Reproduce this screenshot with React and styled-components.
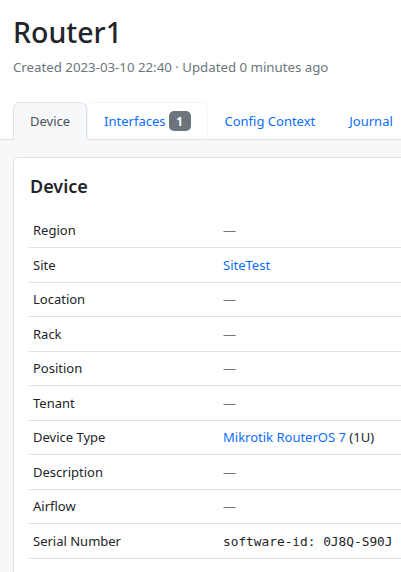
import React from "react";
import styled, { createGlobalStyle } from "styled-components";

const Global = createGlobalStyle`
  html, body { margin: 0; padding: 0; background: #fff; }
  body {
    font-family: "Noto Sans", "Open Sans", sans-serif;
    color: #212529;
    overflow: hidden;
    width: 401px;
    height: 572px;
  }
`;

const Page = styled.div`
  width: 401px;
  height: 572px;
  overflow: hidden;
  display: flex;
  flex-direction: column;
`;

const Header = styled.header`
  padding: 12px 13px 0 13px;
`;

const Title = styled.h1`
  margin: 0;
  font-size: 28.5px;
  font-weight: 500;
  line-height: 40px;
  color: #212529;
`;

const Subtitle = styled.div`
  margin-top: 5px;
  font-size: 13.25px;
  color: #6c757d;
  line-height: 20px;
`;

const TabBar = styled.nav`
  margin-top: 25px;
  display: flex;
  padding-left: 13px;
  border-bottom: 1px solid #dee2e6;
  white-space: nowrap;
`;

const Tab = styled.a`
  display: flex;
  align-items: center;
  gap: 3px;
  height: 36px;
  padding: 0 16px;
  margin-bottom: -1px;
  font-size: 13px;
  color: ${(p) => (p.$active ? "#495057" : "#0d6efd")};
  background: ${(p) => (p.$active ? "#f7f8fa" : "transparent")};
  border: 1px solid ${(p) => (p.$active ? "#dee2e6" : p.$hover ? "#f3f4f6" : "transparent")};
  border-bottom-color: ${(p) => (p.$active ? "#f7f8fa" : "transparent")};
  border-radius: 6px 6px 0 0;
  text-decoration: none;
  flex-shrink: 0;
`;

const Badge = styled.span`
  display: inline-flex;
  align-items: center;
  justify-content: center;
  width: 22px;
  height: 20px;
  border-radius: 5px;
  background: #6c757d;
  color: #fff;
  font-size: 11.5px;
  font-weight: 700;
`;

const Content = styled.main`
  flex: 1;
  background: #f7f8fa;
  padding: 17px 0 0 13px;
`;

const Card = styled.section`
  width: 440px;
  background: #fff;
  border: 1px solid #dee2e6;
  border-radius: 6px;
  padding: 14px 15px;
`;

const CardTitle = styled.h2`
  margin: 0 0 0 1px;
  font-size: 18px;
  font-weight: 600;
  line-height: 28px;
  color: #212529;
`;

const Table = styled.table`
  margin-top: 13px;
  width: 100%;
  border-collapse: collapse;
  font-size: 13px;
`;

const Row = styled.tr`
  height: 34.5px;
  & + & td { border-top: 1px solid #dee2e6; }
`;

const Label = styled.td`
  width: 182px;
  padding: 0 4px;
  color: #212529;
`;

const Value = styled.td`
  padding: 0 4px;
  color: #212529;
`;

const Link = styled.a`
  color: #0d6efd;
  text-decoration: none;
`;

const Dash = styled.span`
  color: #6c757d;
`;

const Mono = styled.span`
  font-family: "DejaVu Sans Mono", "Liberation Mono", monospace;
  font-size: 12.8px;
  color: #212529;
`;

const rows = [
  ["Region", <Dash>—</Dash>],
  ["Site", <Link href="#">SiteTest</Link>],
  ["Location", <Dash>—</Dash>],
  ["Rack", <Dash>—</Dash>],
  ["Position", <Dash>—</Dash>],
  ["Tenant", <Dash>—</Dash>],
  ["Device Type", <><Link href="#">Mikrotik RouterOS 7</Link> (1U)</>],
  ["Description", <Dash>—</Dash>],
  ["Airflow", <Dash>—</Dash>],
  ["Serial Number", <Mono>software-id: 0J8Q-S90J</Mono>],
  ["Asset Tag", <Dash>—</Dash>],
];

export default function App() {
  return (
    <Page>
      <Global />
      <Header>
        <Title>Router1</Title>
        <Subtitle>Created 2023-03-10 22:40 · Updated 0 minutes ago</Subtitle>
      </Header>
      <TabBar>
        <Tab $active href="#">Device</Tab>
        <Tab $hover href="#">Interfaces <Badge>1</Badge></Tab>
        <Tab href="#">Config Context</Tab>
        <Tab href="#">Journal</Tab>
      </TabBar>
      <Content>
        <Card>
          <CardTitle>Device</CardTitle>
          <Table>
            <tbody>
              {rows.map(([k, v]) => (
                <Row key={k}>
                  <Label>{k}</Label>
                  <Value>{v}</Value>
                </Row>
              ))}
            </tbody>
          </Table>
        </Card>
      </Content>
    </Page>
  );
}
